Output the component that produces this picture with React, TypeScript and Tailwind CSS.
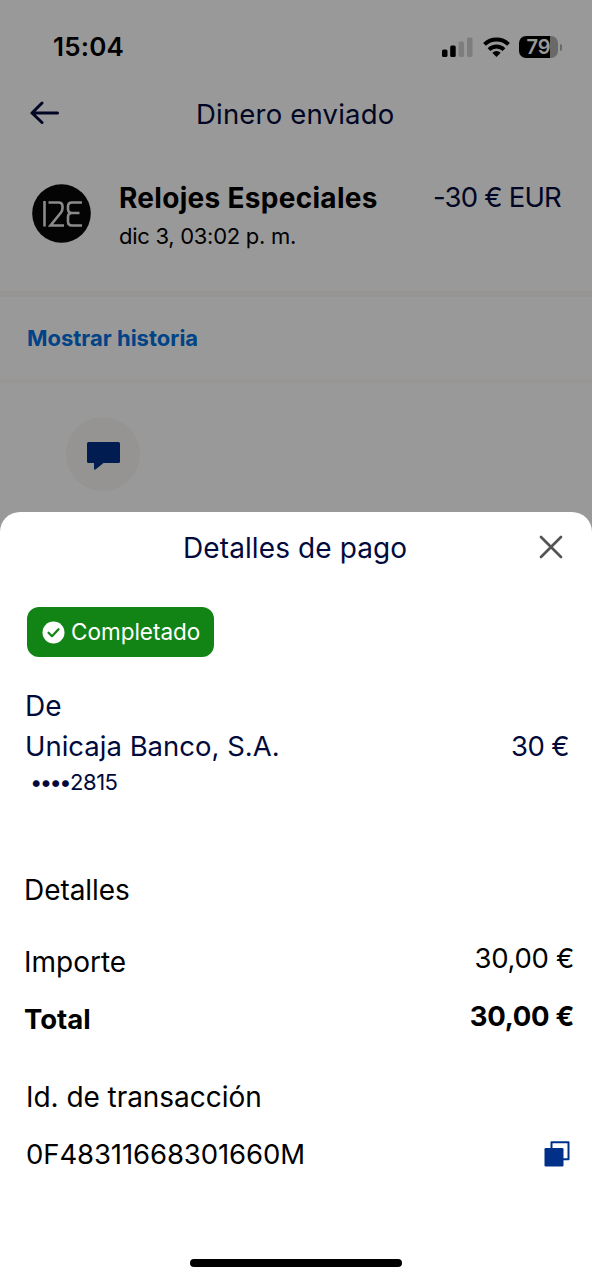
import type { ReactNode } from 'react'

interface Amount {
  label: string
  value: string
  bold?: boolean
}

const AMOUNTS: Amount[] = [
  { label: 'Importe', value: '30,00 €' },
  { label: 'Total', value: '30,00 €', bold: true },
]

export default function App() {
  return (
    <div className="relative h-[1280px] w-[592px] overflow-hidden bg-white font-['Inter','Liberation_Sans',sans-serif] font-[440] text-black">
      <PaymentPage />
      <div className="absolute inset-0 bg-black/40" aria-hidden="true" />
      <DetailsSheet />
    </div>
  )
}

function PaymentPage() {
  return (
    <main>
      <StatusBar />
      <header className="flex h-10 items-center">
        <button className="mb-[3px] ml-[30px] w-[30px]" aria-label="Volver">
          <ArrowLeft />
        </button>
        <h1 className="mt-0.5 ml-[136px] text-[27.5px] font-[440] tracking-[0.2px] whitespace-nowrap text-[#020a3c]">
          Dinero enviado
        </h1>
      </header>

      <section className="mt-[43px] flex h-[120px] border-b-[6px] border-[#fcf9f6]">
        <MerchantLogo />
        <div className="ml-7 flex-1">
          <h2 className="flex h-[41px] items-center text-[28px] font-bold tracking-[0.3px] whitespace-nowrap">
            Relojes Especiales
          </h2>
          <p className="flex h-9 items-center text-[22px] tracking-[-0.28px] whitespace-nowrap">
            dic 3, 03:02 p. m.
          </p>
        </div>
        <p className="mr-[31px] flex h-[41px] items-center text-[27.5px] tracking-[-0.8px] whitespace-nowrap text-[#020a3c]">
          -30 € EUR
        </p>
      </section>

      <section className="flex h-[86px] items-center border-b-4 border-[#fcfaf7] pl-[27px]">
        <a className="text-[22px] font-bold whitespace-nowrap text-[#0070e0]">Mostrar historia</a>
      </section>

      <div className="mt-[34px] ml-[66px] flex size-[74px] items-center justify-center rounded-full bg-[#fbf7f3]">
        <ChatIcon />
      </div>
    </main>
  )
}

function StatusBar() {
  return (
    <div className="flex h-[94px] items-start pt-[29px]">
      <span className="ml-[53px] flex h-[35px] items-center text-[26px] font-semibold tracking-[0.2px]">
        15:04
      </span>
      <div className="ml-auto flex h-9 items-center pr-[30px]">
        <SignalIcon />
        <WifiIcon />
        <BatteryIcon />
      </div>
    </div>
  )
}

function DetailsSheet() {
  return (
    <section
      className="absolute inset-x-0 top-[512px] bottom-0 flex flex-col rounded-t-[20px] bg-white"
      role="dialog"
      aria-label="Detalles de pago"
    >
      <header className="mt-4 flex h-10 items-center">
        <h2 className="ml-[183px] text-[28px] font-[440] tracking-[0.1px] whitespace-nowrap text-[#020a3c]">
          Detalles de pago
        </h2>
        <button className="mr-[29px] mb-0.5 ml-auto" aria-label="Cerrar">
          <CloseIcon />
        </button>
      </header>

      <div className="mt-[39px] ml-[27px] flex h-[50px] w-[187px] items-center rounded-xl bg-[#128416] pl-[15px] text-[22.5px] text-white">
        <CheckBadge />
        <span className="ml-1.5 whitespace-nowrap">Completado</span>
      </div>

      <div className="mt-[29px] pl-[25px] text-[#020a3c]">
        <Line>De</Line>
        <div className="flex h-[42px] items-center justify-between pr-[23px] text-[27.5px] whitespace-nowrap">
          <span>Unicaja Banco, S.A.</span>
          <span className="tracking-[-0.6px]">30 €</span>
        </div>
        <div className="flex h-8 items-center pl-[5px] text-[22px]">
          <span className="mb-1 tracking-[-2.6px]">••••</span>
          <span className="mb-[3px] ml-px tracking-[-0.5px]">2815</span>
        </div>
      </div>

      <div className="mt-[70px] pl-6">
        <Line>Detalles</Line>
        <dl className="mt-[23px]">
          {AMOUNTS.map((row) => (
            <div
              key={row.label}
              className={`flex h-[58px] items-center justify-between pr-[18px] whitespace-nowrap ${
                row.bold ? 'text-[27.5px] font-bold' : 'text-[28px]'
              }`}
            >
              <dt className="mb-px">{row.label}</dt>
              <dd className="mb-[6px] text-[27.5px] tracking-[-0.3px]">{row.value}</dd>
            </div>
          ))}
        </dl>
      </div>

      <div className="mt-[28px] pl-[26px]">
        <Line>Id. de transacción</Line>
        <div className="mt-[17px] flex h-[42px] items-center justify-between pr-[22px] text-[27.5px]">
          <span className="tracking-[-0.1px]">0F48311668301660M</span>
          <button className="mb-0.5" aria-label="Copiar">
            <CopyIcon />
          </button>
        </div>
      </div>

      <div className="mx-auto mt-auto mb-[13px] h-2 w-[212px] rounded-full bg-black" />
    </section>
  )
}

function Line({ children }: { children: ReactNode }) {
  return (
    <p className="flex h-10 items-center text-[28px] tracking-[-0.05px] whitespace-nowrap">{children}</p>
  )
}

function ArrowLeft() {
  return (
    <svg
      width="30"
      height="24"
      viewBox="0 0 30 24"
      fill="none"
      stroke="#020a3c"
      strokeWidth="3"
      strokeLinecap="round"
      strokeLinejoin="round"
    >
      <path d="M12 2 2 12l10 9.500M2 12h25.500" />
    </svg>
  )
}

function MerchantLogo() {
  return (
    <svg className="mt-[7px] ml-8" width="59" height="59" viewBox="0 0 59 59" fill="none">
      <circle cx="29.500" cy="29.500" r="29.300" fill="#070707" />
      <g stroke="#e8e8e8" strokeWidth="2.600">
        <path d="M12.500 17v25.500" />
        <path d="M16.500 18.500h10q4 0 4 4v1.500q0 2.500-1.500 4.500L18.500 41.500h13.500" />
        <path d="M50 18.500h-10q-4 0-4 4v2.500q0 4 4 4h7.500M40 29q-4 0-4 4v4.500q0 4 4 4h10" />
      </g>
    </svg>
  )
}

function ChatIcon() {
  return (
    <svg className="mt-1" width="33" height="28" viewBox="0 0 33 28" fill="#003087">
      <path d="M1.500 0h30q1.500 0 1.500 1.500v18q0 1.500-1.500 1.500H16.500l-8 6.500q-1.500.5-1.500-1V21H1.500Q0 21 0 19.500v-18Q0 0 1.500 0z" />
    </svg>
  )
}

function SignalIcon() {
  return (
    <svg width="31" height="20" viewBox="0 0 31 20" fill="#000">
      <rect x="0" y="12.500" width="5.500" height="7.500" rx="1.600" />
      <rect x="8.200" y="8.500" width="5.500" height="11.500" rx="1.600" />
      <rect x="16.600" y="4.500" width="5.500" height="15.500" rx="1.600" opacity=".18" />
      <rect x="25" y="0.500" width="5.500" height="19.500" rx="1.600" opacity=".18" />
    </svg>
  )
}

function WifiIcon() {
  return (
    <svg
      className="mb-px ml-2.5"
      width="27"
      height="20"
      viewBox="0 0 27 20"
      fill="none"
      stroke="#000"
      strokeWidth="3.900"
    >
      <path d="M1.500 7.400a17.200 17.200 0 0 1 24 0" />
      <path d="M6 12.600a10.700 10.700 0 0 1 15 0" />
      <path d="M13.500 20l-4.200-4.200q4.200-3.400 8.400 0z" fill="#000" stroke="none" />
    </svg>
  )
}

function BatteryIcon() {
  return (
    <div className="ml-[9px] flex items-center">
      <div className="flex h-[22px] w-[39px] items-center justify-center overflow-hidden rounded-[7px] bg-linear-to-r from-black from-80% to-[#b0b0b0] to-80% text-[20px] font-semibold text-white">
        79
      </div>
      <div className="ml-[1.5px] h-[7px] w-[2.5px] rounded-r-full bg-[#b0b0b0]" />
    </div>
  )
}

function CloseIcon() {
  return (
    <svg width="24" height="24" viewBox="0 0 24 24" stroke="#545454" strokeWidth="2.700" strokeLinecap="round">
      <path d="M2 2l20 20M22 2 2 22" />
    </svg>
  )
}

function CheckBadge() {
  return (
    <svg width="23" height="23" viewBox="0 0 23 23" fill="none">
      <circle cx="11.500" cy="11.500" r="11" fill="#fff" />
      <path
        d="M6.500 11.700l3.500 3.500 6.500-7"
        stroke="#128416"
        strokeWidth="2.200"
        strokeLinecap="round"
        strokeLinejoin="round"
      />
    </svg>
  )
}

function CopyIcon() {
  return (
    <svg width="26" height="26" viewBox="0 0 26 26" fill="none">
      <path d="M7.500 7V1.200h17v17H19" stroke="#003087" strokeWidth="2" strokeLinejoin="round" />
      <rect x="0.500" y="7" width="19" height="18.500" rx="1.200" fill="#003087" />
    </svg>
  )
}
